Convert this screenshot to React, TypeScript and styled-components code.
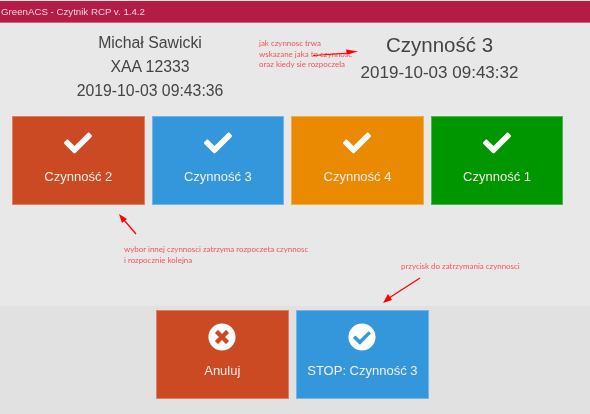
import React from 'react';
import styled, { createGlobalStyle } from 'styled-components';
import { FaCheck, FaCheckCircle, FaTimesCircle } from 'react-icons/fa';

const GlobalStyle = createGlobalStyle`
  html, body {
    margin: 0;
    padding: 0;
    background: #e8e8e8;
  }
  body {
    font-family: "Liberation Sans", Arial, sans-serif;
  }
`;

const Page = styled.div`
  position: relative;
  width: 590px;
  height: 414px;
  overflow: hidden;
  display: flex;
  flex-direction: column;
  background: #e8e8e8;
  color: #444;
  filter: blur(0.4px);
`;

const Header = styled.div`
  margin-top: 1px;
  height: 22px;
  flex-shrink: 0;
  display: flex;
  align-items: center;
  padding-left: 1px;
  background: #b31c44;
  border-bottom: 1px solid #d0627f;
  box-sizing: border-box;
  color: #f0d4dc;
  font-size: 9.7px;
`;

const InfoRow = styled.div`
  height: 93px;
  flex-shrink: 0;
  display: grid;
  grid-template-columns: 300px 279px;
`;

const InfoColumn = styled.div<{ $top: number }>`
  display: flex;
  flex-direction: column;
  align-items: center;
  padding-top: ${props => props.$top}px;
`;

const PersonLine = styled.div`
  font-size: 15.8px;
  line-height: 24px;
`;

const ActivityTitle = styled.div`
  font-size: 20.5px;
  line-height: 32px;
`;

const ActivityTime = styled.div`
  font-size: 17px;
  line-height: 24px;
`;

const TileRow = styled.div`
  display: flex;
  gap: 7px;
  padding-left: 12px;
  flex-shrink: 0;
`;

const Spacer = styled.div`
  flex: 1;
`;

const Footer = styled.div`
  height: 108px;
  flex-shrink: 0;
  display: flex;
  gap: 7.5px;
  padding: 4px 0 0 156px;
  box-sizing: border-box;
  background: #e1e1e1;
`;

const Tile = styled.div<{ $color: string }>`
  width: 132.6px;
  height: 89px;
  box-sizing: border-box;
  display: flex;
  flex-direction: column;
  align-items: center;
  background: ${props => props.$color};
  border: 1px solid rgba(255, 255, 255, 0.3);
  color: #f3eeea;
  font-size: 13px;
`;

const TileIcon = styled.div`
  height: 28px;
  margin-top: 12px;
  margin-bottom: 12px;
  color: #fff;
  font-size: 28px;
  line-height: 0;
`;

const Note = styled.div<{ $x: number; $y: number }>`
  position: absolute;
  left: ${props => props.$x}px;
  top: ${props => props.$y}px;
  color: #f4535f;
  font-family: Lato, "Open Sans", sans-serif;
  font-size: 7.95px;
  line-height: 10.5px;
  white-space: nowrap;
`;

const ArrowLayer = styled.svg`
  position: absolute;
  left: 0;
  top: 0;
  width: 590px;
  height: 414px;
  pointer-events: none;
`;

const tiles = [
  { label: 'Czynność 2', color: '#cc4a23' },
  { label: 'Czynność 3', color: '#3497db' },
  { label: 'Czynność 4', color: '#ea8a02' },
  { label: 'Czynność 1', color: '#009600' },
];

const App: React.FC = () => {
  return (
    <Page>
      <GlobalStyle />
      <Header>GreenACS - Czytnik RCP v. 1.4.2</Header>

      <InfoRow>
        <InfoColumn $top={8}>
          <PersonLine>Michał Sawicki</PersonLine>
          <PersonLine>XAA 12333</PersonLine>
          <PersonLine>2019-10-03 09:43:36</PersonLine>
        </InfoColumn>
        <InfoColumn $top={6}>
          <ActivityTitle>Czynność 3</ActivityTitle>
          <ActivityTime>2019-10-03 09:43:32</ActivityTime>
        </InfoColumn>
      </InfoRow>

      <TileRow>
        {tiles.map(tile => (
          <Tile key={tile.label} $color={tile.color}>
            <TileIcon>
              <FaCheck />
            </TileIcon>
            {tile.label}
          </Tile>
        ))}
      </TileRow>

      <Spacer />

      <Footer>
        <Tile $color="#cc4a23">
          <TileIcon>
            <FaTimesCircle />
          </TileIcon>
          Anuluj
        </Tile>
        <Tile $color="#3497db">
          <TileIcon>
            <FaCheckCircle />
          </TileIcon>
          STOP: Czynność 3
        </Tile>
      </Footer>

      <Note $x={259} $y={38}>
        jak czynnosc trwa
        <br />
        wskazane jaka to czynnosc
        <br />
        oraz kiedy sie rozpoczela
      </Note>
      <Note $x={124} $y={244}>
        wybor innej czynnosci zatrzyma rozpoczeta czynnosc
        <br />i rozpocznie kolejna
      </Note>
      <Note $x={401} $y={261}>
        przycisk do zatrzymania czynnosci
      </Note>

      <ArrowLayer viewBox="0 0 590 414">
        <path d="M313 55.5 L350 53" stroke="#f00" strokeWidth="1.2" fill="none" />
        <path d="M358 51.5 L346 49.5 L347 54.5 Z" fill="#f00" />
        <path d="M136 234 L124 220" stroke="#f00" strokeWidth="1.3" fill="none" />
        <path d="M119 214 L122 223 L127 219 Z" fill="#f00" />
        <path d="M420 278 L389 298" stroke="#f00" strokeWidth="1.3" fill="none" />
        <path d="M383 303 L392 300 L388 294 Z" fill="#f00" />
      </ArrowLayer>
    </Page>
  );
};

export default App;
